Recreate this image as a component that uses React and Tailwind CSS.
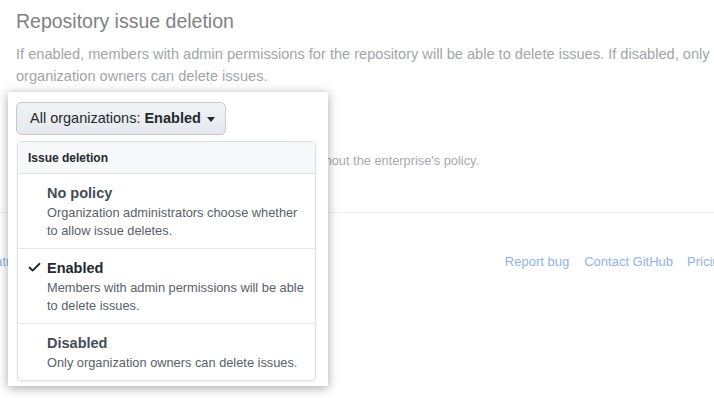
import { Check } from "lucide-react";

const options = [
  {
    title: "No policy",
    desc: "Organization administrators choose whether to allow issue deletes.",
    selected: false,
  },
  {
    title: "Enabled",
    desc: "Members with admin permissions will be able to delete issues.",
    selected: true,
  },
  {
    title: "Disabled",
    desc: "Only organization owners can delete issues.",
    selected: false,
  },
];

const App = () => {
  return (
    <div
      className="relative w-[714px] h-[398px] overflow-hidden bg-white"
      style={{ fontFamily: '"Liberation Sans", Arial, sans-serif' }}
    >
      {/* faded page behind the spotlight */}
      <div className="pt-[8px] px-4">
        <h2 className="text-[19.5px] leading-[26px] text-[#7d8185]">Repository issue deletion</h2>
        <p className="mt-[9px] text-[14.6px] leading-[22px] text-[#a2a5a8] whitespace-nowrap">
          If enabled, members with admin permissions for the repository will be able to delete issues. If disabled, only
          <br />
          organization owners can delete issues.
        </p>
        <p className="mt-[64px] pl-[293px] text-[12.8px] leading-[20px] text-[#a7aaad] whitespace-nowrap">
          without the enterprise's policy.
        </p>
      </div>
      <div className="mt-[41px] border-t border-[#eeeff0]">
        <div className="flex pt-[39px] text-[13px] leading-[20px] text-[#8fb3e8] whitespace-nowrap">
          <span className="-ml-[17px]">Status</span>
          <span className="ml-[485px]">Report bug</span>
          <span className="ml-[15px]">Contact GitHub</span>
          <span className="ml-[14px]">Pricing</span>
        </div>
      </div>

      {/* spotlight */}
      <div className="absolute left-[8px] top-[92px] w-[320px] h-[294px] bg-white shadow-[0_2px_10px_rgba(0,0,0,0.35)]">
        <div className="pl-[8px] pt-[10px]">
          <button
            type="button"
            className="flex items-center h-[33px] w-[210px] pl-[13px] rounded-[5px] border border-[#c7cbcf] bg-gradient-to-b from-[#f0f3f6] to-[#e5e9ed] text-[14.5px] text-[#24292e] whitespace-nowrap"
          >
            <span>All organizations:&nbsp;</span>
            <span className="font-bold">Enabled</span>
            <span className="ml-[6px] mt-[2px] w-0 h-0 border-l-[4px] border-r-[4px] border-t-[5px] border-l-transparent border-r-transparent border-t-[#24292e]" />
          </button>
        </div>
        <div className="ml-[9px] mt-[6px] w-[299px] rounded-[4px] border border-[#dfe2e5] bg-white overflow-hidden shadow-[0_1px_3px_rgba(0,0,0,0.08)]">
          <div className="h-[32px] flex items-center pl-[10px] bg-[#f6f8fa] border-b border-[#e1e4e8] text-[12px] font-bold text-[#24292e]">
            Issue deletion
          </div>
          {options.map((opt, i) => (
            <div
              key={opt.title}
              className={`flex pt-[9px] pb-[8px] ${i < options.length - 1 ? "border-b border-[#e6e8eb]" : ""}`}
            >
              <div className="w-[29px] shrink-0 flex justify-end pr-[5px] pt-[2px]">
                {opt.selected && <Check size={15} strokeWidth={3} className="text-[#24292e]" />}
              </div>
              <div className="pr-[8px]">
                <div
                  className={`text-[14.5px] leading-[20px] font-bold ${opt.selected ? "text-[#24292e]" : "text-[#444d56]"}`}
                >
                  {opt.title}
                </div>
                <div className="mt-[1px] text-[12.8px] leading-[18px] text-[#586069]">{opt.desc}</div>
              </div>
            </div>
          ))}
        </div>
      </div>
    </div>
  );
};

export default App;
